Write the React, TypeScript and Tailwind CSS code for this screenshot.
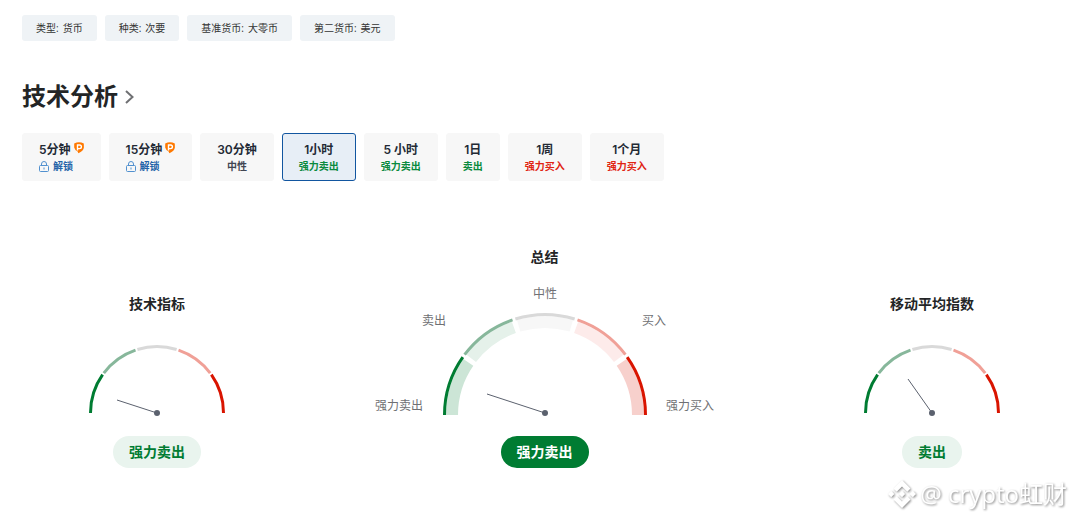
interface Tab {
  label: string;
  status: string;
  tone: 'sell' | 'buy' | 'neutral' | 'locked';
  active?: boolean;
}

const TAGS = [
  { name: '类型', value: '货币' },
  { name: '种类', value: '次要' },
  { name: '基准货币', value: '大零币' },
  { name: '第二货币', value: '美元' },
];

const TABS: Tab[] = [
  { label: '5分钟', status: '解锁', tone: 'locked' },
  { label: '15分钟', status: '解锁', tone: 'locked' },
  { label: '30分钟', status: '中性', tone: 'neutral' },
  { label: '1小时', status: '强力卖出', tone: 'sell', active: true },
  { label: '5 小时', status: '强力卖出', tone: 'sell' },
  { label: '1日', status: '卖出', tone: 'sell' },
  { label: '1周', status: '强力买入', tone: 'buy' },
  { label: '1个月', status: '强力买入', tone: 'buy' },
];

const TONES = {
  sell: 'text-[#0a8a3e]',
  buy: 'text-[#e02412]',
  neutral: 'text-[#414652]',
  locked: 'text-[#2463a8]',
};

const RIM_COLORS = ['#007c32', '#87b79b', '#d9d9d9', '#f0a097', '#d91400'];
const BAND_COLORS = ['#cce5d6', '#e5f1ea', '#f7f7f7', '#fdebea', '#f7d0cc'];

// 180度を5分割した円弧（gapは区切りの幅px）
function arc(cx: number, cy: number, r: number, index: number, gap: number) {
  const pad = gap / 2 / r;
  const step = Math.PI / 5;
  const start = Math.PI - index * step - (index === 0 ? 0 : pad);
  const end = Math.PI - (index + 1) * step + (index === 4 ? 0 : pad);
  const point = (a: number) => `${cx + r * Math.cos(a)} ${cy - r * Math.sin(a)}`;
  return `M ${point(start)} A ${r} ${r} 0 0 1 ${point(end)}`;
}

function PremiumIcon() {
  return (
    <svg width="10" height="12" viewBox="0 0 10 12" aria-hidden="true">
      <path d="M0.2 1.4 Q5 -0.8 9.8 1.4 L9.9 5.4 Q9.4 9 4.4 11.2 L3.6 9.4 Q0.8 8 0.2 5.4 Z" fill="#ff7901" />
      <path d="M3.5 8.4 V3 H5.6 A1.8 1.8 0 0 1 5.6 6.6 H3.9" fill="none" stroke="#fff" strokeWidth="1.4" />
    </svg>
  );
}

function LockIcon() {
  return (
    <svg width="10" height="11" viewBox="0 0 10 11" fill="none" stroke="#5190cf" aria-hidden="true">
      <rect x="0.5" y="4.5" width="9" height="6" rx="1" />
      <path d="M2.5 4.5 V3 A2.5 2.5 0 0 1 7.5 3 V4.5" />
      <path d="M5 6.5 V8.5" />
    </svg>
  );
}

function TabButton({ tab }: { tab: Tab }) {
  const locked = tab.tone === 'locked';
  return (
    <button
      type="button"
      aria-pressed={!!tab.active}
      className={`flex h-12 flex-col justify-center rounded-[3px] border px-4 pt-[2px] ${
        locked ? 'items-start' : 'items-center'
      } ${tab.active ? 'border-[#1256a0] bg-[#e7eef6]' : 'border-[#f7f7f7] bg-[#f7f7f7]'}`}
    >
      <span className="flex items-start gap-[3px] text-xs leading-4 font-semibold text-[#232a35]">
        {tab.label}
        {locked && <PremiumIcon />}
      </span>
      <span className={`flex items-center gap-1 text-[10px] leading-4 font-semibold ${TONES[tab.tone]}`}>
        {locked && <LockIcon />}
        {tab.status}
      </span>
    </button>
  );
}

function SmallGauge({ title, signal, needle }: { title: string; signal: string; needle: [number, number] }) {
  return (
    <section className="flex w-[270px] flex-col items-center">
      <h3 className="text-sm leading-5 font-bold text-[#232526]">{title}</h3>
      <svg className="mt-7" width="144" height="76" viewBox="0 0 144 76" role="img" aria-label={`${title} ${signal}`}>
        {RIM_COLORS.map((color, i) => (
          <path key={color} d={arc(72, 71, 66.5, i, 2)} fill="none" stroke={color} strokeWidth="3" />
        ))}
        <line x1="72" y1="71" x2={needle[0]} y2={needle[1]} stroke="#5b616e" />
        <circle cx="72" cy="71" r="3" fill="#5b616e" />
      </svg>
      <div className="mt-[18px] rounded-full bg-[#e9f4ee] px-4 text-sm leading-8 font-bold text-[#007c32]">{signal}</div>
    </section>
  );
}

function SummaryGauge() {
  return (
    <section className="flex flex-1 flex-col items-center">
      <h3 className="text-sm leading-5 font-bold text-[#232526]">总结</h3>
      <svg className="mt-4" width="344" height="135" viewBox="0 0 344 135" role="img" aria-label="总结 强力卖出">
        {BAND_COLORS.map((color, i) => (
          <path key={color} d={arc(172, 132, 93, i, 5)} fill="none" stroke={color} strokeWidth="12" />
        ))}
        {RIM_COLORS.map((color, i) => (
          <path key={color} d={arc(172, 132, 100.5, i, 3)} fill="none" stroke={color} strokeWidth="3" />
        ))}
        <line x1="172" y1="130" x2="114" y2="111" stroke="#5b616e" />
        <circle cx="172" cy="130" r="3" fill="#5b616e" />
        <g fontSize="12" fill="#6f7073">
          <text x="172" y="15" textAnchor="middle">中性</text>
          <text x="61" y="42" textAnchor="middle">卖出</text>
          <text x="281" y="42" textAnchor="middle">买入</text>
          <text x="26" y="127" textAnchor="middle">强力卖出</text>
          <text x="317" y="127" textAnchor="middle">强力买入</text>
        </g>
      </svg>
      <div className="mt-[18px] rounded-full bg-[#007c32] px-4 text-sm leading-8 font-bold text-white">强力卖出</div>
    </section>
  );
}

function Watermark() {
  return (
    <div className="absolute right-2 bottom-2 flex items-center gap-1 text-2xl leading-9 text-white [filter:drop-shadow(1px_1px_1px_#8a8a8a)]">
      <svg width="28" height="28" viewBox="0 0 28 28" fill="currentColor" aria-hidden="true">
        <path d="M14 0 L22.5 8.5 L19.3 11.7 L14 6.4 L8.7 11.7 L5.5 8.5 Z" />
        <path d="M14 28 L22.5 19.5 L19.3 16.3 L14 21.6 L8.7 16.3 L5.5 19.5 Z" />
        <path d="M3.2 10.8 L6.4 14 L3.2 17.2 L0 14 Z" />
        <path d="M24.8 10.8 L28 14 L24.8 17.2 L21.6 14 Z" />
        <path d="M14 10.8 L17.2 14 L14 17.2 L10.8 14 Z" />
      </svg>
      <span>@ crypto虹财</span>
    </div>
  );
}

export default function App() {
  return (
    <div className="relative min-h-screen bg-white pt-[15px] pr-2 pl-[22px] font-['Inter','Noto_Sans_CJK_SC',sans-serif]">
      <ul className="flex flex-wrap gap-2 font-['Open_Sans','Noto_Sans_CJK_SC',sans-serif]">
        {TAGS.map((tag) => (
          <li
            key={tag.name}
            className="flex gap-1 rounded-[3px] bg-[#eff3f6] px-[14px] text-[10px] leading-[26px] text-[#333333]"
          >
            <span>{tag.name}:</span>
            <span>{tag.value}</span>
          </li>
        ))}
      </ul>

      <h2 className="mt-10 text-2xl leading-8 font-bold text-[#232526]">
        <a href="#technical" className="inline-flex items-center gap-[7px]">
          技术分析
          <svg width="9" height="14" viewBox="0 0 9 14" fill="none" stroke="#6f7073" strokeWidth="2" aria-hidden="true">
            <path d="M1 1 L7.5 7 L1 13" />
          </svg>
        </a>
      </h2>

      <div className="mt-5 flex flex-wrap gap-2">
        {TABS.map((tab) => (
          <TabButton key={tab.label} tab={tab} />
        ))}
      </div>

      <div className="mt-[66px] flex items-end font-['Open_Sans','Noto_Sans_CJK_SC',sans-serif]">
        <SmallGauge title="技术指标" signal="强力卖出" needle={[32, 58]} />
        <SummaryGauge />
        <SmallGauge title="移动平均指数" signal="卖出" needle={[48, 37]} />
      </div>

      <div className="font-['Open_Sans','Noto_Sans_CJK_SC',sans-serif]">
        <Watermark />
      </div>
    </div>
  );
}
